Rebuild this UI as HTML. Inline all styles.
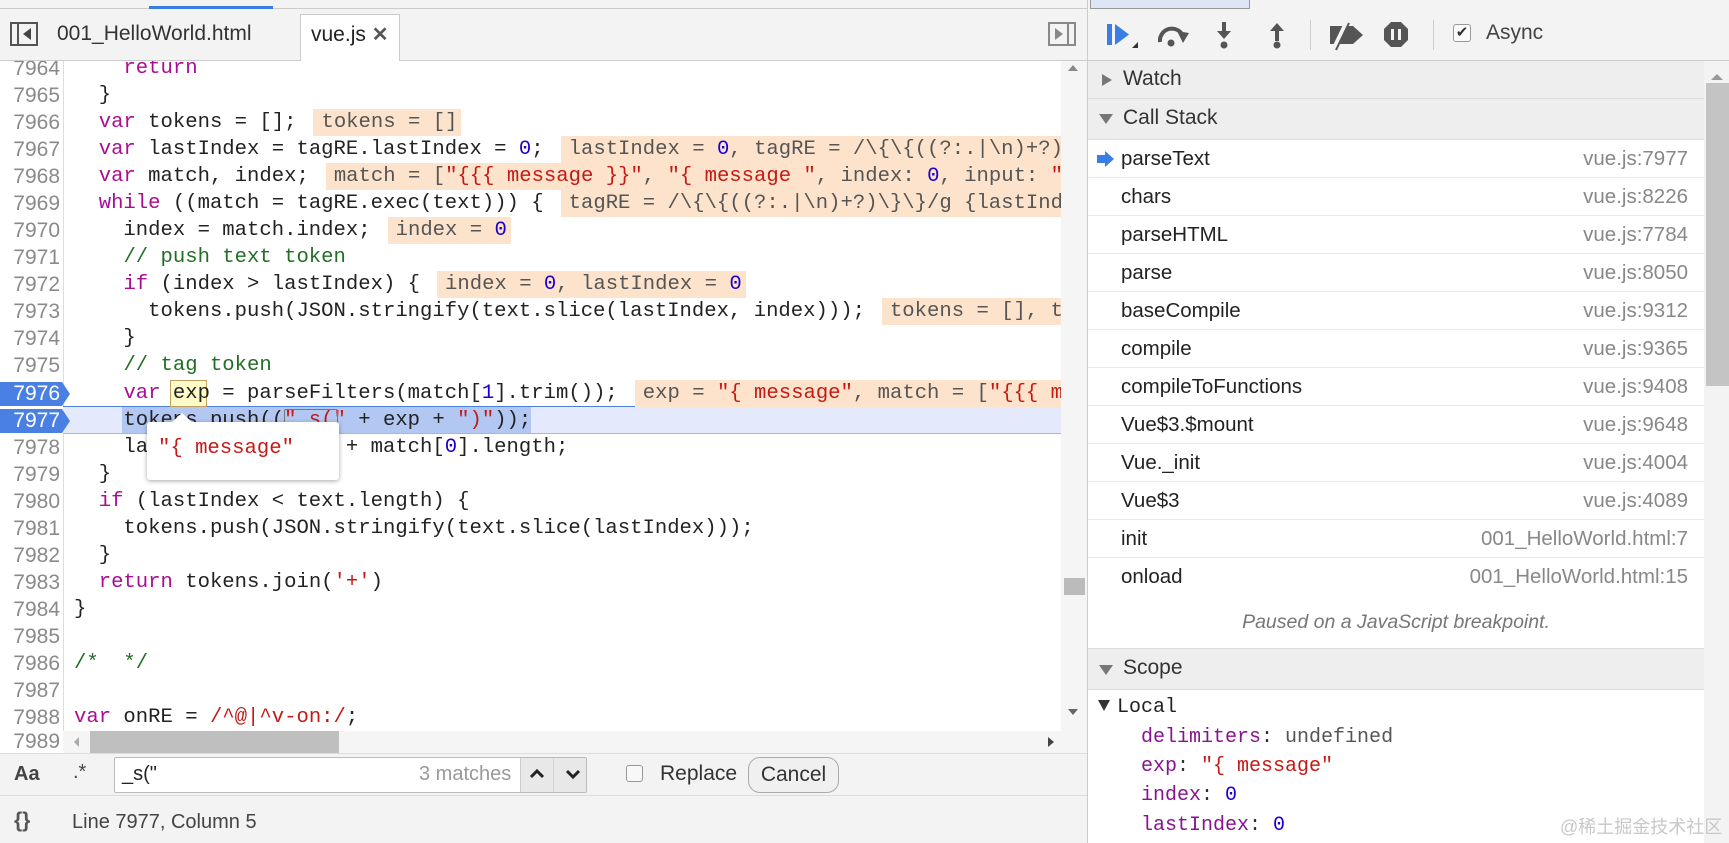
<!DOCTYPE html>
<html><head><meta charset="utf-8"><style>
*{margin:0;padding:0;box-sizing:border-box}
body{width:1729px;height:843px;overflow:hidden;background:#fff;font-family:"Liberation Sans","Noto Sans CJK SC",sans-serif;position:relative;color:#333}
.abs{position:absolute}
.mono{font-family:"Liberation Mono","DejaVu Sans Mono",monospace}
#code{position:absolute;left:0;top:61px;width:1061px;height:670px;overflow:hidden;background:#fff}
.ln{position:absolute;left:0;width:63px;height:27px;text-align:right;padding-right:3px;color:#8a8a8a;font-size:21px;line-height:27px}
.cl{position:absolute;left:74px;height:27px;line-height:27px;font-size:20.6px;white-space:pre;color:#222;font-family:"Liberation Mono","DejaVu Sans Mono",monospace}
.k{color:#aa0d91}.n{color:#1c00cf}.s{color:#c41a16}.c{color:#236e25}
.an{background:#fde3cb;color:#555;margin-left:17px;padding-left:8px;padding-right:4px;display:inline-block;height:27px}
.hdr{position:absolute;left:1088px;width:616px;background:#eeeeee;border-bottom:1px solid #ddd;font-size:21px;color:#333}
.row{position:absolute;left:1088px;width:616px;height:38px;border-bottom:1px solid #e8e8e8;font-size:20.5px;line-height:38px;background:#fff}
.row .f{position:absolute;left:33px;color:#222}
.row .l{position:absolute;right:16px;color:#888}
.sc{position:absolute;left:1141px;font-size:20px;line-height:29px;white-space:pre}
.p{color:#881391}
</style></head><body>

<div class="abs" style="left:0;top:0;width:1088px;height:9px;background:#f3f3f3;border-bottom:1px solid #ccc"></div>
<div class="abs" style="left:149px;top:6px;width:124px;height:3px;background:#3b7de6"></div>
<div class="abs" style="left:0;top:9px;width:1088px;height:52px;background:#f3f3f3;border-bottom:1px solid #ccc"></div>
<svg class="abs" style="left:10px;top:22px" width="30" height="26"><rect x="1" y="1" width="26" height="22" fill="none" stroke="#555" stroke-width="2"/><line x1="8" y1="1" x2="8" y2="23" stroke="#555" stroke-width="2"/><path d="M21 6 L13 12 L21 18Z" fill="#444"/></svg>
<div class="abs" style="left:57px;top:22px;font-size:21px;color:#333">001_HelloWorld.html</div>
<div class="abs" style="left:300px;top:14px;width:100px;height:48px;background:#fff;border:1px solid #ccc;border-bottom:none"></div>
<div class="abs" style="left:311px;top:22px;font-size:21px;color:#222">vue.js <span style="font-size:20px;color:#555;font-weight:bold">✕</span></div>
<svg class="abs" style="left:1048px;top:22px" width="30" height="26"><rect x="1" y="1" width="26" height="22" fill="none" stroke="#888" stroke-width="2"/><line x1="20" y1="1" x2="20" y2="23" stroke="#888" stroke-width="2"/><path d="M7 6 L15 12 L7 18Z" fill="#888"/></svg>

<div id="code">
<div class="abs" style="left:63px;top:0;width:1px;height:670px;background:#ddd"></div>
<div class="abs" style="left:63px;top:345px;width:998px;height:28px;background:#e4eafc;border-top:1px solid #4c80e0;border-bottom:1px solid #9fb6e8"></div>
<div class="abs" style="left:122px;top:346px;width:409px;height:26px;background:#b3c7f3"></div>
<div class="abs" style="left:170px;top:319px;width:37px;height:27px;background:#fffbc8;border:1px solid #c0a060"></div>

<div class="ln" style="top:-6px">7964</div><div class="cl" style="top:-6px"><span class="k">    return</span></div>
<div class="ln" style="top:21px">7965</div><div class="cl" style="top:21px">  }</div>
<div class="ln" style="top:48px">7966</div><div class="cl" style="top:48px">  <span class="k">var</span> tokens = [];<span class="an">tokens = []</span></div>
<div class="ln" style="top:75px">7967</div><div class="cl" style="top:75px">  <span class="k">var</span> lastIndex = tagRE.lastIndex = <span class="n">0</span>;<span class="an">lastIndex = <span class="n">0</span>, tagRE = /\{\{((?:.|\n)+?)\}\}/g</span></div>
<div class="ln" style="top:102px">7968</div><div class="cl" style="top:102px">  <span class="k">var</span> match, index;<span class="an">match = [<span class="s">"{{{ message }}"</span>, <span class="s">"{ message "</span>, index: <span class="n">0</span>, input: <span class="s">"&lt;div id=\"app\"&gt;"</span></span></div>
<div class="ln" style="top:129px">7969</div><div class="cl" style="top:129px">  <span class="k">while</span> ((match = tagRE.exec(text))) {<span class="an">tagRE = /\{\{((?:.|\n)+?)\}\}/g {lastIndex: 0}</span></div>
<div class="ln" style="top:156px">7970</div><div class="cl" style="top:156px">    index = match.index;<span class="an">index = <span class="n">0</span></span></div>
<div class="ln" style="top:183px">7971</div><div class="cl" style="top:183px">    <span class="c">// push text token</span></div>
<div class="ln" style="top:210px">7972</div><div class="cl" style="top:210px">    <span class="k">if</span> (index &gt; lastIndex) {<span class="an">index = <span class="n">0</span>, lastIndex = <span class="n">0</span></span></div>
<div class="ln" style="top:237px">7973</div><div class="cl" style="top:237px">      tokens.push(JSON.stringify(text.slice(lastIndex, index)));<span class="an">tokens = [], text = "x"</span></div>
<div class="ln" style="top:264px">7974</div><div class="cl" style="top:264px">    }</div>
<div class="ln" style="top:291px">7975</div><div class="cl" style="top:291px">    <span class="c">// tag token</span></div>
<svg class="abs" style="left:0;top:321px" width="72" height="24"><path d="M0 0 H62 L70 12 L62 24 H0Z" fill="#4a7fe3"/></svg>
<div class="ln" style="top:319px;color:#fff">7976</div><div class="cl" style="top:319px">    <span class="k">var</span> exp = parseFilters(match[<span class="n">1</span>].trim());<span class="an">exp = <span class="s">"{ message"</span>, match = [<span class="s">"{{{ message }}"</span></span></div>
<svg class="abs" style="left:0;top:348px" width="72" height="24"><path d="M0 0 H62 L70 12 L62 24 H0Z" fill="#4a7fe3"/></svg>
<div class="ln" style="top:346px;color:#fff">7977</div><div class="cl" style="top:346px">    tokens.push((<span class="s">"_s("</span> + exp + <span class="s">")"</span>));</div>
<div class="abs" style="left:284px;top:348px;width:54px;height:24px;border:1px solid #777;border-radius:2px"></div>
<div class="ln" style="top:373px">7978</div><div class="cl" style="top:373px">    lastIndex = index + match[<span class="n">0</span>].length;</div>
<div class="ln" style="top:400px">7979</div><div class="cl" style="top:400px">  }</div>
<div class="ln" style="top:427px">7980</div><div class="cl" style="top:427px">  <span class="k">if</span> (lastIndex &lt; text.length) {</div>
<div class="ln" style="top:454px">7981</div><div class="cl" style="top:454px">    tokens.push(JSON.stringify(text.slice(lastIndex)));</div>
<div class="ln" style="top:481px">7982</div><div class="cl" style="top:481px">  }</div>
<div class="ln" style="top:508px">7983</div><div class="cl" style="top:508px">  <span class="k">return</span> tokens.join(<span class="s">'+'</span>)</div>
<div class="ln" style="top:535px">7984</div><div class="cl" style="top:535px">}</div>
<div class="ln" style="top:562px">7985</div>
<div class="ln" style="top:589px">7986</div><div class="cl" style="top:589px"><span class="c">/*  */</span></div>
<div class="ln" style="top:616px">7987</div>
<div class="ln" style="top:643px">7988</div><div class="cl" style="top:643px"><span class="k">var</span> onRE = <span class="s">/^@|^v-on:/</span>;</div>
<div class="ln" style="top:670px">7989</div>

<div class="abs" style="left:147px;top:361px;width:192px;height:58px;background:#fff;border-radius:3px;box-shadow:0 1px 5px rgba(0,0,0,.35)"></div>
<svg class="abs" style="left:170px;top:351px" width="24" height="12"><path d="M0 12 L12 1 L24 12Z" fill="#fff"/></svg>
<div class="abs mono" style="left:158px;top:376px;font-size:20.6px;color:#c41a16">"{ message"</div>
</div>

<div class="abs" style="left:1061px;top:61px;width:27px;height:670px;background:#f5f5f5"></div>
<svg class="abs" style="left:1066px;top:62px" width="14" height="12"><path d="M2 9 L7 3 L12 9Z" fill="#888"/></svg>
<svg class="abs" style="left:1066px;top:706px" width="14" height="12"><path d="M2 3 L7 9 L12 3Z" fill="#666"/></svg>
<div class="abs" style="left:1064px;top:578px;width:21px;height:17px;background:#bbb"></div>
<div class="abs" style="left:63px;top:731px;width:1025px;height:22px;background:#f5f5f5"></div>
<div class="abs" style="left:0;top:731px;width:63px;height:22px;background:#fff"></div>
<div class="ln" style="top:731px;line-height:22px;height:22px">7989</div>
<div class="abs" style="left:90px;top:731px;width:249px;height:22px;background:#bfbfbf"></div>
<svg class="abs" style="left:72px;top:735px" width="10" height="14"><path d="M7 2 L2 7 L7 12Z" fill="#aaa"/></svg>
<svg class="abs" style="left:1046px;top:735px" width="10" height="14"><path d="M2 2 L8 7 L2 12Z" fill="#444"/></svg>

<div class="abs" style="left:0;top:753px;width:1088px;height:43px;background:#f3f3f3;border-top:1px solid #ddd;border-bottom:1px solid #ddd"></div>
<div class="abs" style="left:14px;top:763px;font-size:20px;font-weight:bold;color:#444">Aa</div>
<div class="abs" style="left:73px;top:761px;font-size:20px;color:#444">.*</div>
<div class="abs" style="left:114px;top:757px;width:473px;height:36px;background:#fff;border:1px solid #bbb;border-radius:2px"></div>
<div class="abs" style="left:122px;top:763px;font-size:20px;color:#222">_s("</div>
<div class="abs" style="left:419px;top:763px;font-size:20px;color:#999">3 matches</div>
<div class="abs" style="left:520px;top:758px;width:66px;height:34px;background:#e8e8e8;border-left:1px solid #ccc"></div>
<div class="abs" style="left:553px;top:758px;width:1px;height:34px;background:#d5d5d5"></div>
<svg class="abs" style="left:528px;top:766px" width="56" height="16"><path d="M3 11 L9 5 L15 11" fill="none" stroke="#222" stroke-width="3"/><path d="M39 5 L45 11 L51 5" fill="none" stroke="#222" stroke-width="3"/></svg>
<div class="abs" style="left:626px;top:765px;width:17px;height:17px;border:1px solid #999;border-radius:3px;background:#f8f8f8"></div>
<div class="abs" style="left:660px;top:762px;font-size:21px;color:#333">Replace</div>
<div class="abs" style="left:748px;top:757px;width:91px;height:36px;border:1px solid #aaa;border-radius:12px;background:#f0f0f0;font-size:21px;line-height:34px;text-align:center;color:#333">Cancel</div>
<div class="abs" style="left:0;top:796px;width:1088px;height:47px;background:#f3f3f3"></div>
<div class="abs" style="left:14px;top:809px;font-size:21px;font-weight:bold;color:#555">{}</div>
<div class="abs" style="left:72px;top:811px;font-size:20px;color:#444">Line 7977, Column 5</div>

<div class="abs" style="left:1087px;top:0;width:1px;height:843px;background:#ccc"></div>
<div class="abs" style="left:1088px;top:0;width:641px;height:61px;background:#f3f3f3;border-bottom:1px solid #ccc"></div>
<div class="abs" style="left:1090px;top:0;width:160px;height:9px;background:#dde6f5;border:1px solid #999;border-top:none"></div>
<svg class="abs" style="left:1100px;top:18px" width="340" height="36">
<rect x="7" y="6" width="5" height="21" fill="#3b7de6"/><path d="M15 6 L29 16.5 L15 27Z" fill="#3b7de6"/><path d="M32 30 L38 30 L38 24Z" fill="#333"/>
<path d="M60 24 A12 12 0 0 1 83 18" fill="none" stroke="#555" stroke-width="4"/><path d="M77 13 L89 15 L83 25Z" fill="#555"/><circle cx="71" cy="25" r="3.5" fill="#555"/>
<rect x="122" y="4" width="4" height="11" fill="#555"/><path d="M117 13 L131 13 L124 21Z" fill="#555"/><circle cx="124" cy="27" r="3.5" fill="#555"/>
<rect x="175" y="12" width="4" height="11" fill="#555"/><path d="M170 13 L184 13 L177 5Z" fill="#555"/><circle cx="177" cy="27" r="3.5" fill="#555"/>
<rect x="210" y="2" width="1" height="30" fill="#ccc"/>
<path d="M230 8 H253 L263 17 L253 26 H230Z" fill="#555"/><line x1="247" y1="3" x2="233" y2="32" stroke="#f3f3f3" stroke-width="4"/><line x1="249" y1="5" x2="236" y2="32" stroke="#555" stroke-width="2"/>
<path d="M291 4 H301 L308 11 V22 L301 29 H291 L284 22 V11Z" fill="#555"/><rect x="291" y="11" width="3" height="11" fill="#f3f3f3"/><rect x="298" y="11" width="3" height="11" fill="#f3f3f3"/>
<rect x="333" y="2" width="1" height="30" fill="#ccc"/>
</svg>
<div class="abs" style="left:1453px;top:24px;width:18px;height:18px;border:1px solid #999;border-radius:3px;background:#fafafa;font-size:15px;line-height:16px;text-align:center;color:#333">✔</div>
<div class="abs" style="left:1486px;top:21px;font-size:21px;color:#444">Async</div>

<div class="abs" style="left:1704px;top:61px;width:25px;height:782px;background:#f3f3f3"></div>
<svg class="abs" style="left:1709px;top:72px" width="16" height="10"><path d="M2 8 L8 2 L14 8Z" fill="#999"/></svg>
<div class="abs" style="left:1706px;top:83px;width:23px;height:303px;background:#c4c4c4"></div>

<div class="hdr" style="top:61px;height:38px"><svg class="abs" style="left:13px;top:12px" width="12" height="14"><path d="M1 1 L11 7 L1 13Z" fill="#777"/></svg><span class="abs" style="left:35px;top:6px">Watch</span></div>
<div class="hdr" style="top:99px;height:41px"><svg class="abs" style="left:10px;top:14px" width="16" height="12"><path d="M1 1 H15 L8 11Z" fill="#777"/></svg><span class="abs" style="left:35px;top:7px">Call Stack</span></div>

<div class="row" style="top:140px"><svg class="abs" style="left:8px;top:11px" width="20" height="16"><path d="M1 4 H9 V0 L18 8 L9 16 V12 H1Z" fill="#3b7de6"/></svg><span class="f">parseText</span><span class="l">vue.js:7977</span></div>
<div class="row" style="top:178px"><span class="f">chars</span><span class="l">vue.js:8226</span></div>
<div class="row" style="top:216px"><span class="f">parseHTML</span><span class="l">vue.js:7784</span></div>
<div class="row" style="top:254px"><span class="f">parse</span><span class="l">vue.js:8050</span></div>
<div class="row" style="top:292px"><span class="f">baseCompile</span><span class="l">vue.js:9312</span></div>
<div class="row" style="top:330px"><span class="f">compile</span><span class="l">vue.js:9365</span></div>
<div class="row" style="top:368px"><span class="f">compileToFunctions</span><span class="l">vue.js:9408</span></div>
<div class="row" style="top:406px"><span class="f">Vue$3.$mount</span><span class="l">vue.js:9648</span></div>
<div class="row" style="top:444px"><span class="f">Vue._init</span><span class="l">vue.js:4004</span></div>
<div class="row" style="top:482px"><span class="f">Vue$3</span><span class="l">vue.js:4089</span></div>
<div class="row" style="top:520px"><span class="f">init</span><span class="l">001_HelloWorld.html:7</span></div>
<div class="row" style="top:558px;border-bottom:none"><span class="f">onload</span><span class="l">001_HelloWorld.html:15</span></div>
<div class="abs" style="left:1088px;top:596px;width:616px;height:52px;background:#fff;text-align:center;font-style:italic;font-size:19.5px;line-height:52px;color:#777">Paused on a JavaScript breakpoint.</div>
<div class="hdr" style="top:648px;height:42px;border-top:1px solid #ddd"><svg class="abs" style="left:10px;top:15px" width="16" height="12"><path d="M1 1 H15 L8 11Z" fill="#777"/></svg><span class="abs" style="left:35px;top:7px">Scope</span></div>
<div class="abs" style="left:1088px;top:690px;width:616px;height:153px;background:#fff"></div>
<svg class="abs" style="left:1097px;top:699px" width="14" height="14"><path d="M1 1 H13 L7 12Z" fill="#333"/></svg>
<div class="sc mono" style="left:1117px;top:693px;color:#222">Local</div>
<div class="sc mono" style="top:723px"><span class="p">delimiters</span>: <span style="color:#555">undefined</span></div>
<div class="sc mono" style="top:752px"><span class="p">exp</span>: <span class="s">"{ message"</span></div>
<div class="sc mono" style="top:781px"><span class="p">index</span>: <span class="n">0</span></div>
<div class="sc mono" style="top:811px"><span class="p">lastIndex</span>: <span class="n">0</span></div>
<div class="abs" style="left:1560px;top:813px;font-size:18px;color:#c8c8c8">@稀土掘金技术社区</div>
</body></html>
